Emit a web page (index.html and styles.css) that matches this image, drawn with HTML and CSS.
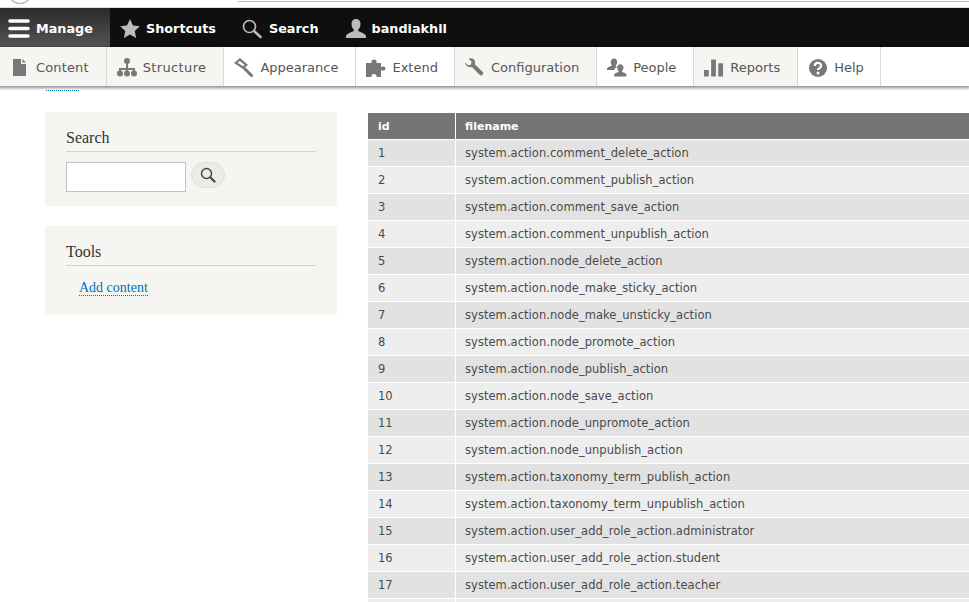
FILE: index.html
```html
<!DOCTYPE html>
<html lang="en">
<head>
  <meta charset="utf-8">
  <title>Actions</title>
  <link rel="stylesheet" href="styles.css">
</head>
<body>

<div class="chrome">
  <span class="chrome-circle"></span>
  <span class="chrome-field"></span>
</div>

<nav class="bar">
  <a class="bar-item active">
    <svg width="22" height="20" viewBox="0 0 22 20"><path d="M2 2h18M2 9.500h18M2 17h18" stroke="#fff" stroke-width="3.600" stroke-linecap="round"/></svg>
    Manage
  </a>
  <a class="bar-item">
    <svg width="20" height="19" viewBox="0 0 20 19"><path d="M10 0l3 6.400 6.800.9-5 4.800 1.300 6.900-6.100-3.400-6.100 3.400 1.300-6.900-5-4.800 6.800-.9z" fill="#bbb"/></svg>
    Shortcuts
  </a>
  <a class="bar-item">
    <svg width="20" height="20" viewBox="0 0 20 20"><circle cx="7.500" cy="7.500" r="6" fill="none" stroke="#bbb" stroke-width="1.700"/><path d="M12 12l6.500 6" stroke="#bbb" stroke-width="2.600" stroke-linecap="round"/></svg>
    Search
  </a>
  <a class="bar-item">
    <svg width="20" height="20" viewBox="0 0 20 20"><path d="M10 0c3 0 4.500 2.300 4.500 5 0 2.300-1 4.500-2.200 5.600v1.700c2.700.8 6.700 2.400 7.700 4.700v2H0v-2c1-2.300 5-3.900 7.700-4.700v-1.700C6.500 9.500 5.500 7.300 5.500 5 5.500 2.300 7 0 10 0z" fill="#bbb"/></svg>
    bandiakhil
  </a>
</nav>

<nav class="tray">
  <a class="tray-item shaded">
    <span class="tray-icon"><svg width="14" height="17" viewBox="0 0 14 17"><path d="M0 0h8v5h5v12H0zM9.500 0L13 3.500H9.500z" fill="#787878"/></svg></span>
    Content
  </a>
  <a class="tray-item shaded">
    <span class="tray-icon"><svg width="20" height="19" viewBox="0 0 20 19"><path d="M10 3v12M3 15v-4h14v4" fill="none" stroke="#787878" stroke-width="2"/><circle cx="10" cy="3" r="3" fill="#787878"/><circle cx="3" cy="15.500" r="3" fill="#787878"/><circle cx="10" cy="15.500" r="3" fill="#787878"/><circle cx="17" cy="15.500" r="3" fill="#787878"/></svg></span>
    Structure
  </a>
  <a class="tray-item">
    <span class="tray-icon"><svg width="20" height="19" viewBox="0 0 20 19"><path d="M6 0l8 7-5 4L0 5z" fill="#787878"/><path d="M5.700 3L10.700 7 9 8.300 3.500 4.800z" fill="#fff"/><path d="M10.500 10.500l7 7" stroke="#787878" stroke-width="3" stroke-linecap="round"/></svg></span>
    Appearance
  </a>
  <a class="tray-item">
    <span class="tray-icon"><svg width="20" height="18" viewBox="0 0 20 18"><path d="M0 4h5.500C5 2 6 .5 8 .5S11 2 10.500 4H15v4c1.500-1 4.500-1 4.500 1.500S16.500 12 15 11v7h-4.500c.5-1.500-.5-3-2.500-3s-3 1.500-2.500 3H0z" fill="#787878"/></svg></span>
    Extend
  </a>
  <a class="tray-item shaded">
    <span class="tray-icon"><svg width="20" height="20" viewBox="0 0 20 20"><path d="M0 4.500L3.500 7.500 6 6.500 6.500 3.500 3.500 .8C6-.5 9.500.5 10 3.500c.2 1 .1 2-.2 2.700l8 7.800c1.500 1.800-1.300 4.600-3 3l-7.800-8c-3 1-6.500-.8-7-4.500z" fill="#787878"/></svg></span>
    Configuration
  </a>
  <a class="tray-item">
    <span class="tray-icon"><svg width="21" height="19" viewBox="0 0 21 19"><path d="M7.500 0c2 0 3.200 1.500 3.200 3.500 0 1.300-.5 2.800-1.400 3.700v1c.5.200 1 .4 1.500.7-1.500.7-3 1.800-3.300 3.100H0v-1.500c.5-1.300 3-2.200 5-2.800v-.5C4 6.300 4 4.800 4 3.500 4 1.500 5.500 0 7.500 0z" fill="#787878"/><path d="M14 6c2 0 3.300 1.500 3.300 3.500 0 1.300-.6 2.800-1.500 3.700v1c2 .6 4.200 1.400 4.700 2.600V19H7.500v-2.200c.5-1.200 2.700-2 4.700-2.600v-1c-.9-.9-1.500-2.400-1.500-3.700C10.700 7.500 12 6 14 6z" fill="#787878"/></svg></span>
    People
  </a>
  <a class="tray-item shaded">
    <span class="tray-icon"><svg width="21" height="18" viewBox="0 0 21 18"><path d="M0 11h5v7H0zM7.500 0h5v18h-5zM15 4h5v14h-5z" fill="#787878"/></svg></span>
    Reports
  </a>
  <a class="tray-item">
    <span class="tray-icon"><svg width="18" height="18" viewBox="0 0 18 18"><circle cx="9" cy="9" r="9" fill="#787878"/><path d="M5.800 7c0-4 6.400-4 6.400-.3 0 2.600-3.200 2.400-3.200 4.300" fill="none" stroke="#fff" stroke-width="2.200"/><circle cx="9" cy="14" r="1.500" fill="#fff"/></svg></span>
    Help
  </a>
</nav>

<div class="page">
  <span class="skip-link"></span>
  <aside class="sidebar">
    <section class="block">
      <h2>Search</h2>
      <form class="search-form">
        <input class="search-input" type="text">
        <button class="search-btn" type="button">
          <svg width="16" height="16" viewBox="0 0 16 16"><circle cx="6.500" cy="6.500" r="5" fill="none" stroke="#444" stroke-width="1.400"/><path d="M10.500 10.500l4 4" stroke="#444" stroke-width="2.200" stroke-linecap="round"/></svg>
        </button>
      </form>
    </section>
    <section class="block">
      <h2>Tools</h2>
      <ul class="tools"><li><a href="#">Add content</a></li></ul>
    </section>
  </aside>

  <main class="content">
    <table class="files">
      <thead><tr><th>id</th><th>filename</th></tr></thead>
      <tbody>
        <tr><td>1</td><td>system.action.comment_delete_action</td></tr>
        <tr><td>2</td><td>system.action.comment_publish_action</td></tr>
        <tr><td>3</td><td>system.action.comment_save_action</td></tr>
        <tr><td>4</td><td>system.action.comment_unpublish_action</td></tr>
        <tr><td>5</td><td>system.action.node_delete_action</td></tr>
        <tr><td>6</td><td>system.action.node_make_sticky_action</td></tr>
        <tr><td>7</td><td>system.action.node_make_unsticky_action</td></tr>
        <tr><td>8</td><td>system.action.node_promote_action</td></tr>
        <tr><td>9</td><td>system.action.node_publish_action</td></tr>
        <tr><td>10</td><td>system.action.node_save_action</td></tr>
        <tr><td>11</td><td>system.action.node_unpromote_action</td></tr>
        <tr><td>12</td><td>system.action.node_unpublish_action</td></tr>
        <tr><td>13</td><td>system.action.taxonomy_term_publish_action</td></tr>
        <tr><td>14</td><td>system.action.taxonomy_term_unpublish_action</td></tr>
        <tr><td>15</td><td>system.action.user_add_role_action.administrator</td></tr>
        <tr><td>16</td><td>system.action.user_add_role_action.student</td></tr>
        <tr><td>17</td><td>system.action.user_add_role_action.teacher</td></tr>
        <tr><td>&nbsp;</td><td>&nbsp;</td></tr>
      </tbody>
    </table>
  </main>
</div>

</body>
</html>
```

FILE: styles.css
```css
html, body { margin: 0; height: 602px; overflow: hidden; }
body { background: #fff; color: #444; font: 12px/1.2 "DejaVu Sans", Verdana, sans-serif; }

/* browser strip left over at the top */
.chrome { box-sizing: border-box; height: 8px; overflow: hidden; position: relative; background: #fff; border-bottom: 1px solid #ddd; }
.chrome-circle { position: absolute; left: 6px; top: -28px; width: 26px; height: 30px; border: 1px solid #aaa; border-radius: 50%; }
.chrome-field { position: absolute; left: 238px; right: 0; top: 0; height: 1px; border-bottom: 1px solid #bbb; }

.bar { display: flex; height: 39px; background: #0f0f0f; }
.bar-item { display: flex; align-items: center; gap: 7px; padding: 2px 13px 0 13px; color: #fff; font-weight: 700; font-size: 12.800px; }
.bar-item:nth-child(1) { padding-left: 8px; padding-right: 17px; gap: 6px; }
.bar-item:nth-child(2) { padding-left: 10px; gap: 6px; }
.bar-item:nth-child(4) { padding-left: 14px; gap: 6px; }
.bar-item.active { background: linear-gradient(to bottom, #2a2a2a, #555); }

.tray { display: flex; height: 39px; background: #fff; box-shadow: 0 1px 3px 1px rgba(0,0,0,.45); position: relative; }
.tray-item { display: flex; align-items: center; gap: 6px; padding: 2px 17px 0 10px; border-right: 1px solid #d8d8d8; color: #565656; font-size: 13px; }
.tray-item.shaded { background: #f5f5f2; }
.tray-item:nth-child(1) { letter-spacing: .15px; }
.tray-item:nth-child(2) { letter-spacing: .35px; }
.tray-item:nth-child(4), .tray-item:nth-child(8) { padding-right: 16px; }
.tray-icon { display: flex; justify-content: center; width: 20px; }

.page { display: flex; position: relative; padding: 26px 0 0 45px; gap: 31px; }
.skip-link { position: absolute; left: 46px; top: 4px; width: 33px; border-top: 1px dotted #0071b8; }

.sidebar { flex: 0 0 292px; display: flex; flex-direction: column; gap: 20px; }
.block { background: #f5f5f2; padding: 15px 21px 14px; font-family: "Liberation Serif", Georgia, serif; }
.block h2 { margin: 0 0 10px; padding: 1px 0 4px; border-bottom: 1px solid #d3d3d0; font-size: 16px; font-weight: 400; line-height: 19px; color: #333; }
.search-form { display: flex; align-items: flex-start; gap: 5px; }
.search-input { box-sizing: border-box; width: 120px; height: 30px; margin: 0; padding: 0; border: 1px solid #c4c4c4; background: #fff; }
.search-btn { display: flex; align-items: center; justify-content: center; width: 34px; height: 26px; margin: 0; padding: 0; border: 1px solid #dedede; border-radius: 13px; background: #ecebe7; }
.tools { list-style: none; margin: 0; padding: 3px 0 4px 13px; font-size: 14px; line-height: 18px; }
.tools a { color: #0071b8; text-decoration: none; border-bottom: 1px dotted #0071b8; }

.content { flex: 1; min-width: 0; padding-top: 1px; }
.files { width: 100%; border-collapse: separate; border-spacing: 0; table-layout: fixed; }
.files th, .files td { box-sizing: border-box; height: 27px; padding: 2px 10px 0; border: 0 solid #fff; border-bottom-width: 1px; text-align: left; font-size: 11.500px; letter-spacing: .05px; }
.files th:first-child, .files td:first-child { width: 88px; border-right-width: 1px; }
.files th:last-child, .files td:last-child { padding-left: 9px; }
.files th { background: #757575; color: #fff; font-weight: 700; font-size: 11px; letter-spacing: 0; }
.files td { color: #4a4a4a; }
.files tbody tr:nth-child(odd) td { background: #e2e2e2; }
.files tbody tr:nth-child(even) td { background: #eeeeee; }
```
